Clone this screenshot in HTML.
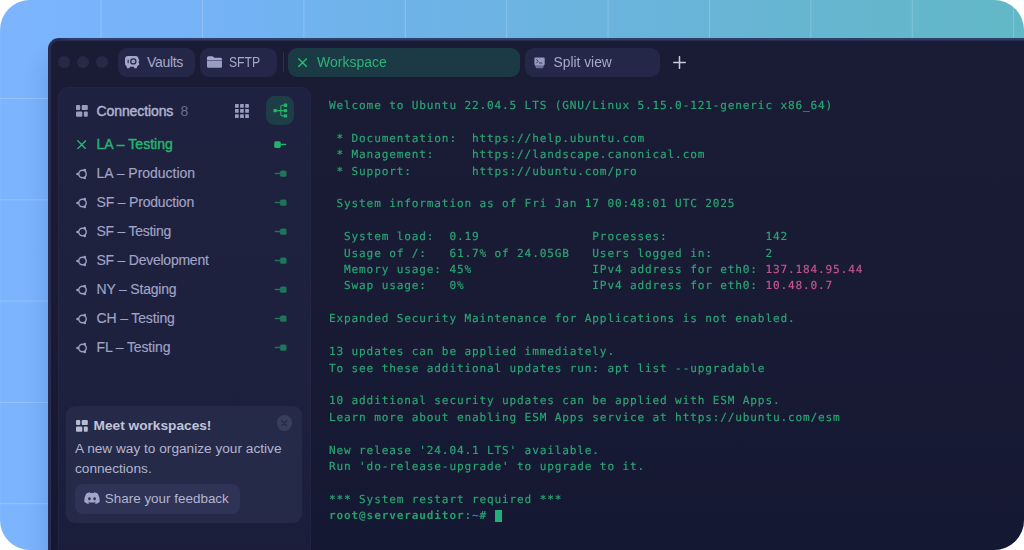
<!DOCTYPE html>
<html lang="en">
<head>
<meta charset="utf-8">
<title>Workspace</title>
<style>
*{box-sizing:border-box;margin:0;padding:0}
html,body{width:1024px;height:550px;background:#fff;overflow:hidden}
body{font-family:"Liberation Sans",sans-serif;position:relative}
.page{position:absolute;left:0;top:0;width:1024px;height:550px;border-radius:30px;overflow:hidden;
  background:linear-gradient(90deg,#7cb5fd 0%,#7ab4fc 6%,#73b2f4 25%,#6fb3ea 35%,#6bb4e0 55%,#67b5d3 75%,#62b8c6 100%)}
.grid{position:absolute;left:0;top:0;width:1024px;height:550px;
  background-image:
   linear-gradient(90deg,rgba(255,255,255,.2) 0,rgba(255,255,255,.2) 1px,transparent 1px),
   linear-gradient(0deg,rgba(255,255,255,.2) 0,rgba(255,255,255,.2) 1px,transparent 1px);
  background-size:101.4px 101.4px,101.3px 101.3px;background-position:100.6px 0,0 99px}
.win{position:absolute;left:48px;top:38px;width:1000px;height:540px;background:linear-gradient(180deg,#1a1c36 0%,#191b35 45%,#151832 95%);
  border-top-left-radius:11px;border-top:3.5px solid #272d50;border-left:3.8px solid #272b4e;box-shadow:-2px 22px 22px rgba(10,30,100,.16)}
.soft{position:absolute;left:-20px;top:-20px;width:1064px;height:590px;filter:blur(.38px)}
.stage{position:absolute;left:20px;top:20px;width:1024px;height:550px}
.abs{position:absolute}
.dot{position:absolute;top:56.2px;width:12px;height:12px;border-radius:50%;background:#262a47}
.tab{position:absolute;top:48px;height:28.8px;border-radius:9px;background:#242748;color:#a6a9c9;font-size:14px;line-height:29px;white-space:nowrap}
.tab span{position:absolute;top:0}
.tab.active{background:#1c3a46;color:#2bb277}
.side{position:absolute;left:57.6px;top:87.2px;width:253.2px;height:480px;box-shadow:inset 0 0 0 1px rgba(140,150,220,.045);border-radius:11px;background:linear-gradient(180deg,#1e213f 0%,#1e213e 60%,#1b1e3a 100%)}
.row{position:absolute;left:58px;width:252px;height:29px;color:#a1a4c6;-webkit-text-stroke:.15px #a1a4c6;font-size:14px;letter-spacing:.03px;line-height:29px;white-space:nowrap}
.row .t{position:absolute;left:38.5px;top:0}
.row svg{position:absolute}
.row.on{color:#25b573;-webkit-text-stroke:.4px #25b573;letter-spacing:.03px}
.card{position:absolute;left:66px;top:406px;width:236px;height:117px;border-radius:9px;background:#262a49}
.term{position:absolute;left:329px;top:97px;transform:translateY(.55px);font-family:"DejaVu Sans Mono","Liberation Mono",monospace;font-size:11.1px;text-rendering:geometricPrecision;letter-spacing:.845px;line-height:16.41px;color:#2aa573;-webkit-text-stroke:.18px #2aa573;white-space:pre}
.term b{font-weight:bold;color:#25a06b;-webkit-text-stroke:0}
.pk{color:#c4568b;-webkit-text-stroke-color:#c4568b}
.bl{color:#3f7fd8;-webkit-text-stroke-color:#3f7fd8}
.cur{position:absolute;left:494.5px;top:510px;width:7.5px;height:12px;background:#22b07a}
</style>
</head>
<body>
<div class="page">
<div class="soft"><div class="stage">
<div class="grid"></div>
<div class="win"></div>
<div class="abs" style="left:58px;top:38px;width:970px;height:1.6px;background:linear-gradient(90deg,rgba(48,64,102,0),#2f3e64 14px)"></div>

<!-- traffic lights -->
<div class="dot" style="left:57.8px"></div>
<div class="dot" style="left:76.9px"></div>
<div class="dot" style="left:96px"></div>

<!-- tabs -->
<div class="tab" style="left:118px;width:77px"><span style="left:29px;letter-spacing:-.3px">Vaults</span></div>
<div class="tab" style="left:200px;width:77px"><span style="left:29px;transform:scaleX(.87);transform-origin:0 50%">SFTP</span></div>
<div class="abs" style="left:282.5px;top:52px;width:1px;height:20px;background:#2c3052"></div>
<div class="tab active" style="left:288px;width:232px"><span style="left:29px">Workspace</span></div>
<div class="tab" style="left:525px;width:135px"><span style="left:28.5px;font-size:13.8px">Split view</span></div>


<!-- tab icons -->
<svg class="abs" style="left:125px;top:56px" width="15" height="13" viewBox="0 0 15 13">
  <path fill="#a4a7c9" d="M3 0h7.5a3 3 0 0 1 3 3v.2h.6v2.3h-.6v1.2h.6V9h-.6a2.6 2.6 0 0 1-1.6 1.5v1.1a.6.6 0 0 1-.6.6H9.600a.6.6 0 0 1-.6-.6v-.9H4.700v.9a.6.6 0 0 1-.6.6H2.400a.6.6 0 0 1-.6-.6v-1.1A3 3 0 0 1 0 7.700V3a3 3 0 0 1 3-3z"/>
  <rect x="2.6" y="3.4" width="1.1" height="3.9" rx=".5" fill="#24284a"/>
  <circle cx="8.3" cy="5.4" r="3.2" fill="#24284a"/>
  <circle cx="8.3" cy="5.4" r="1.9" fill="#a4a7c9"/>
  <circle cx="8.3" cy="5.4" r=".7" fill="#7a7da4"/>
</svg>
<svg class="abs" style="left:207px;top:56px" width="15" height="12" viewBox="0 0 15 12">
  <path fill="#a4a7c9" d="M1.600.3h3.700c.5 0 .9.200 1.200.6l.7.900h6.200c.9 0 1.600.7 1.600 1.600v.5H0V1.900C0 1 .7.300 1.600.300z"/>
  <path fill="#9a9dc2" d="M0 4.500h15v5.700c0 .9-.7 1.600-1.600 1.600H1.600C.7 11.800 0 11.100 0 10.200z"/>
</svg>
<svg class="abs" style="left:297.5px;top:57.700px" width="9.400" height="9.400" viewBox="0 0 10 10">
  <path d="M.7.700l8.400 8.400M9.100.7L.7 9.100" stroke="#2bb873" stroke-width="1.500" stroke-linecap="round" fill="none"/>
</svg>
<svg class="abs" style="left:533.5px;top:56.500px" width="11" height="12" viewBox="0 0 11 12">
  <path fill="#6c7097" d="M.8 8h9.400L8.900 11.200H2.100z"/>
  <rect x=".4" y=".4" width="10.300" height="7.800" rx="1.200" fill="#989bc0"/>
  <path d="M2.500 2.600l1.600 1.700-1.600 1.700" stroke="#2a2e50" stroke-width=".9" fill="none" stroke-linecap="round" stroke-linejoin="round"/>
  <path d="M5.300 6h2.600" stroke="#2a2e50" stroke-width=".9" stroke-linecap="round"/>
</svg>
<svg class="abs" style="left:673px;top:56px" width="13" height="13" viewBox="0 0 13 13">
  <path d="M6.500.7v11.600M.7 6.500h11.600" stroke="#c9cbdd" stroke-width="1.500" stroke-linecap="round" fill="none"/>
</svg>

<!-- sidebar -->
<div class="side"></div>
<div class="abs" style="left:265.8px;top:96px;width:28.3px;height:28.6px;border-radius:8.5px;background:#1e3d47"></div>
<div class="abs" style="left:96.5px;top:96.5px;height:29px;line-height:29px;font-size:14px;color:#b0b3d0;-webkit-text-stroke:.45px #b0b3d0;white-space:nowrap;letter-spacing:-.1px">Connections</div>
<div class="abs" style="left:180.5px;top:96.5px;height:29px;line-height:29px;font-size:14px;color:#6a6e8e">8</div>

<svg class="abs" style="left:75.8px;top:104.8px" width="12" height="12" viewBox="0 0 12 12">
  <rect x="0" y="0" width="4.200" height="5.100" rx="1" fill="#9a9dc2"/><rect x="5.700" y="0" width="6.100" height="5.100" rx="1" fill="#9a9dc2"/>
  <rect x="0" y="6.600" width="6.300" height="5.100" rx="1" fill="#9a9dc2"/><rect x="7.800" y="6.600" width="4" height="5.100" rx="1" fill="#9a9dc2"/>
</svg>
<svg class="abs" style="left:234.600px;top:103.600px" width="14" height="14" viewBox="0 0 14 14" fill="#999cc0">
  <rect x="0" y="0" width="3.700" height="3.700" rx=".5"/><rect x="5.100" y="0" width="3.700" height="3.700" rx=".5"/><rect x="10.200" y="0" width="3.700" height="3.700" rx=".5"/>
  <rect x="0" y="5.100" width="3.700" height="3.700" rx=".5"/><rect x="5.100" y="5.100" width="3.700" height="3.700" rx=".5"/><rect x="10.200" y="5.100" width="3.700" height="3.700" rx=".5"/>
  <rect x="0" y="10.200" width="3.700" height="3.700" rx=".5"/><rect x="5.100" y="10.200" width="3.700" height="3.700" rx=".5"/><rect x="10.200" y="10.200" width="3.700" height="3.700" rx=".5"/>
</svg>
<svg class="abs" style="left:273px;top:103px" width="15" height="15" viewBox="0 0 15 15">
  <path d="M3 7.600h9M12 2.300H9.400a1.600 1.600 0 0 0-1.600 1.600v7.400a1.600 1.600 0 0 0 1.600 1.600H12" stroke="#22b468" stroke-width="1.100" fill="none"/>
  <rect x=".4" y="5.900" width="3.400" height="3.400" rx=".8" fill="#22b468"/>
  <rect x="10.800" y=".6" width="3.400" height="3.400" rx=".8" fill="#22b468"/>
  <rect x="10.800" y="5.900" width="3.400" height="3.400" rx=".8" fill="#22b468"/>
  <rect x="10.800" y="11.200" width="3.400" height="3.400" rx=".8" fill="#22b468"/>
</svg>

<div class="row on" style="top:129.5px"><svg style="left:18.800px;top:10.100px" width="9.500" height="9.500" viewBox="0 0 10 10"><path d="M.8.800l8.300 8.300M9.100.8L.8 9.100" stroke="#25b573" stroke-width="1.500" stroke-linecap="round" fill="none"/></svg><svg style="left:216px;top:11.400px" width="13" height="8" viewBox="0 0 13 8"><rect x=".2" y=".3" width="6.600" height="6.600" rx="1.600" fill="#23b26c"/><rect x="6.500" y="2.850" width="5.800" height="1.500" rx=".7" fill="#23b26c"/></svg><span class="t">LA – Testing</span></div>
<div class="row" style="top:158.5px"><svg style="left:17.800px;top:9.200px" width="12" height="12" viewBox="0 0 12 12"><circle cx="6.500" cy="6" r="3.750" stroke="#9c9fc3" stroke-width="1.400" fill="none"/><circle cx="1.500" cy="6" r="1.300" fill="#9c9fc3"/><circle cx="8.800" cy="2.050" r="1.300" fill="#9c9fc3"/><circle cx="8.800" cy="9.950" r="1.300" fill="#9c9fc3"/></svg><svg style="left:216px;top:11.400px" width="13" height="8" viewBox="0 0 13 8"><rect x="6.100" y=".4" width="6.400" height="6.400" rx="1.600" fill="#1f7559"/><rect x=".6" y="2.850" width="6" height="1.400" rx=".7" fill="#1f7559"/></svg><span class="t" style="letter-spacing:-0.02px">LA – Production</span></div>
<div class="row" style="top:187.5px"><svg style="left:17.800px;top:9.200px" width="12" height="12" viewBox="0 0 12 12"><circle cx="6.500" cy="6" r="3.750" stroke="#9c9fc3" stroke-width="1.400" fill="none"/><circle cx="1.500" cy="6" r="1.300" fill="#9c9fc3"/><circle cx="8.800" cy="2.050" r="1.300" fill="#9c9fc3"/><circle cx="8.800" cy="9.950" r="1.300" fill="#9c9fc3"/></svg><svg style="left:216px;top:11.400px" width="13" height="8" viewBox="0 0 13 8"><rect x="6.100" y=".4" width="6.400" height="6.400" rx="1.600" fill="#1f7559"/><rect x=".6" y="2.850" width="6" height="1.400" rx=".7" fill="#1f7559"/></svg><span class="t" style="letter-spacing:-0.19px">SF – Production</span></div>
<div class="row" style="top:216.5px"><svg style="left:17.800px;top:9.200px" width="12" height="12" viewBox="0 0 12 12"><circle cx="6.500" cy="6" r="3.750" stroke="#9c9fc3" stroke-width="1.400" fill="none"/><circle cx="1.500" cy="6" r="1.300" fill="#9c9fc3"/><circle cx="8.800" cy="2.050" r="1.300" fill="#9c9fc3"/><circle cx="8.800" cy="9.950" r="1.300" fill="#9c9fc3"/></svg><svg style="left:216px;top:11.400px" width="13" height="8" viewBox="0 0 13 8"><rect x="6.100" y=".4" width="6.400" height="6.400" rx="1.600" fill="#1f7559"/><rect x=".6" y="2.850" width="6" height="1.400" rx=".7" fill="#1f7559"/></svg><span class="t" style="letter-spacing:-0.26px">SF – Testing</span></div>
<div class="row" style="top:245.5px"><svg style="left:17.800px;top:9.200px" width="12" height="12" viewBox="0 0 12 12"><circle cx="6.500" cy="6" r="3.750" stroke="#9c9fc3" stroke-width="1.400" fill="none"/><circle cx="1.500" cy="6" r="1.300" fill="#9c9fc3"/><circle cx="8.800" cy="2.050" r="1.300" fill="#9c9fc3"/><circle cx="8.800" cy="9.950" r="1.300" fill="#9c9fc3"/></svg><svg style="left:216px;top:11.400px" width="13" height="8" viewBox="0 0 13 8"><rect x="6.100" y=".4" width="6.400" height="6.400" rx="1.600" fill="#1f7559"/><rect x=".6" y="2.850" width="6" height="1.400" rx=".7" fill="#1f7559"/></svg><span class="t" style="letter-spacing:-0.24px">SF – Development</span></div>
<div class="row" style="top:274.5px"><svg style="left:17.800px;top:9.200px" width="12" height="12" viewBox="0 0 12 12"><circle cx="6.500" cy="6" r="3.750" stroke="#9c9fc3" stroke-width="1.400" fill="none"/><circle cx="1.500" cy="6" r="1.300" fill="#9c9fc3"/><circle cx="8.800" cy="2.050" r="1.300" fill="#9c9fc3"/><circle cx="8.800" cy="9.950" r="1.300" fill="#9c9fc3"/></svg><svg style="left:216px;top:11.400px" width="13" height="8" viewBox="0 0 13 8"><rect x="6.100" y=".4" width="6.400" height="6.400" rx="1.600" fill="#1f7559"/><rect x=".6" y="2.850" width="6" height="1.400" rx=".7" fill="#1f7559"/></svg><span class="t" style="letter-spacing:-0.19px">NY – Staging</span></div>
<div class="row" style="top:303.5px"><svg style="left:17.800px;top:9.200px" width="12" height="12" viewBox="0 0 12 12"><circle cx="6.500" cy="6" r="3.750" stroke="#9c9fc3" stroke-width="1.400" fill="none"/><circle cx="1.500" cy="6" r="1.300" fill="#9c9fc3"/><circle cx="8.800" cy="2.050" r="1.300" fill="#9c9fc3"/><circle cx="8.800" cy="9.950" r="1.300" fill="#9c9fc3"/></svg><svg style="left:216px;top:11.400px" width="13" height="8" viewBox="0 0 13 8"><rect x="6.100" y=".4" width="6.400" height="6.400" rx="1.600" fill="#1f7559"/><rect x=".6" y="2.850" width="6" height="1.400" rx=".7" fill="#1f7559"/></svg><span class="t" style="letter-spacing:-0.14px">CH – Testing</span></div>
<div class="row" style="top:332.5px"><svg style="left:17.800px;top:9.200px" width="12" height="12" viewBox="0 0 12 12"><circle cx="6.500" cy="6" r="3.750" stroke="#9c9fc3" stroke-width="1.400" fill="none"/><circle cx="1.500" cy="6" r="1.300" fill="#9c9fc3"/><circle cx="8.800" cy="2.050" r="1.300" fill="#9c9fc3"/><circle cx="8.800" cy="9.950" r="1.300" fill="#9c9fc3"/></svg><svg style="left:216px;top:11.400px" width="13" height="8" viewBox="0 0 13 8"><rect x="6.100" y=".4" width="6.400" height="6.400" rx="1.600" fill="#1f7559"/><rect x=".6" y="2.850" width="6" height="1.400" rx=".7" fill="#1f7559"/></svg><span class="t" style="letter-spacing:-0.14px">FL – Testing</span></div>

<!-- card -->
<div class="card"></div>
<div class="abs" style="left:93.5px;top:415px;height:21px;line-height:21px;font-size:13.7px;font-weight:bold;color:#c1c3d9;white-space:nowrap">Meet workspaces!</div>
<div class="abs" style="left:75px;top:438.5px;width:222px;line-height:20.4px;font-size:13.66px;color:#b3b5cf">A new way to organize your active connections.</div>
<div class="abs" style="left:276.5px;top:415px;width:15.5px;height:15.5px;border-radius:50%;background:#3a3e5d"></div>
<div class="abs" style="left:75px;top:484px;width:165px;height:29.5px;border-radius:8px;background:#2f3355"></div>
<div class="abs" style="left:104.8px;top:483.7px;height:29.5px;line-height:29.5px;font-size:13.45px;color:#b3b5d0;white-space:nowrap">Share your feedback</div>

<svg class="abs" style="left:75.8px;top:419.8px" width="12" height="12" viewBox="0 0 12 12">
  <rect x="0" y="0" width="4.200" height="5.100" rx="1" fill="#b9bbd2"/><rect x="5.700" y="0" width="6.100" height="5.100" rx="1" fill="#b9bbd2"/>
  <rect x="0" y="6.600" width="6.300" height="5.100" rx="1" fill="#b9bbd2"/><rect x="7.800" y="6.600" width="4" height="5.100" rx="1" fill="#b9bbd2"/>
</svg>
<svg class="abs" style="left:281.3px;top:419.800px" width="6.400" height="6.400" viewBox="0 0 7 7"><path d="M.8.800l5.400 5.400M6.200.8L.8 6.200" stroke="#262a49" stroke-width="1.600" stroke-linecap="round" fill="none"/></svg>
<svg class="abs" style="left:84px;top:492.100px" width="16" height="12.200" viewBox="0 2.500 24 19">
<path fill="#a2a5c9" d="M20.317 4.3698a19.7913 19.7913 0 00-4.8851-1.5152.0741.0741 0 00-.0785.0371c-.211.3753-.4447.8648-.6083 1.2495-1.8447-.2762-3.68-.2762-5.4868 0-.1636-.3933-.4058-.8742-.6177-1.2495a.077.077 0 00-.0785-.037 19.7363 19.7363 0 00-4.8852 1.515.0699.0699 0 00-.0321.0277C.5334 9.0458-.319 13.5799.0992 18.0578a.0824.0824 0 00.0312.0561c2.0528 1.5076 4.0413 2.4228 5.9929 3.0294a.0777.0777 0 00.0842-.0276c.4616-.6304.8731-1.2952 1.226-1.9942a.076.076 0 00-.0416-.1057c-.6528-.2476-1.2743-.5495-1.8722-.8923a.077.077 0 01-.0076-.1277c.1258-.0943.2517-.1923.3718-.2914a.0743.0743 0 01.0776-.0105c3.9278 1.7933 8.18 1.7933 12.0614 0a.0739.0739 0 01.0785.0095c.1202.099.246.1981.3728.2924a.077.077 0 01-.0066.1276 12.2986 12.2986 0 01-1.873.8914.0766.0766 0 00-.0407.1067c.3604.698.7719 1.3628 1.225 1.9932a.076.076 0 00.0842.0286c1.961-.6067 3.9495-1.5219 6.0023-3.0294a.077.077 0 00.0313-.0552c.5004-5.177-.8382-9.6739-3.5485-13.6604a.061.061 0 00-.0312-.0286zM8.02 15.3312c-1.1825 0-2.1569-1.0857-2.1569-2.419 0-1.3332.9555-2.4189 2.157-2.4189 1.2108 0 2.1757 1.0952 2.1568 2.419 0 1.3332-.9555 2.4189-2.1569 2.4189zm7.9748 0c-1.1825 0-2.1569-1.0857-2.1569-2.419 0-1.3332.9554-2.4189 2.1569-2.4189 1.2108 0 2.1757 1.0952 2.1568 2.419 0 1.3332-.946 2.4189-2.1568 2.4189Z"/>
</svg>

<!-- terminal -->
<div class="term">Welcome to Ubuntu 22.04.5 LTS (GNU/Linux 5.15.0-121-generic x86_64)

 * Documentation:  https://help.ubuntu.com
 * Management:     https://landscape.canonical.com
 * Support:        https://ubuntu.com/pro

 System information as of Fri Jan 17 00:48:01 UTC 2025

  System load:  0.19               Processes:             142
  Usage of /:   61.7% of 24.05GB   Users logged in:       2
  Memory usage: 45%                IPv4 address for eth0: <span class="pk">137.184.95.44</span>
  Swap usage:   0%                 IPv4 address for eth0: <span class="pk">10.48.0.7</span>

Expanded Security Maintenance for Applications is not enabled.

13 updates can be applied immediately.
To see these additional updates run: apt list --upgradable

10 additional security updates can be applied with ESM Apps.
Learn more about enabling ESM Apps service at https://ubuntu.com/esm

New release '24.04.1 LTS' available.
Run 'do-release-upgrade' to upgrade to it.

*** System restart required ***
<b>root@serverauditor</b>:<span class="bl">~</span># </div>
<div class="cur"></div>
</div></div>
</div>
</body>
</html>
